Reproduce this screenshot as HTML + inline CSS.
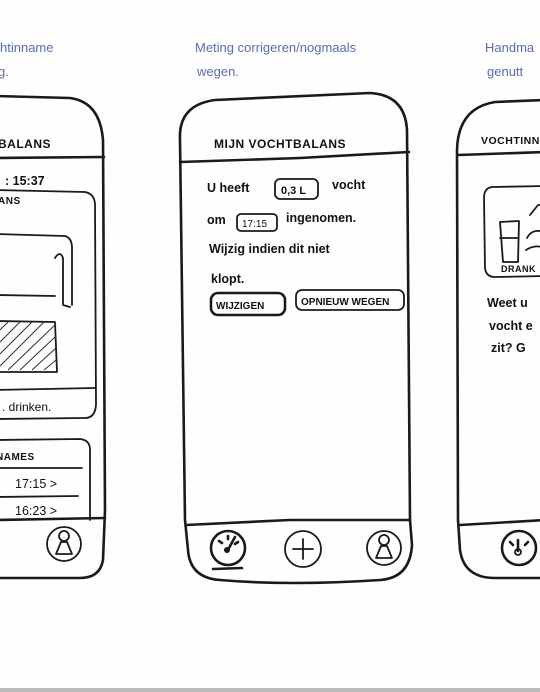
<!DOCTYPE html>
<html><head><meta charset="utf-8"><style>
html,body{margin:0;padding:0;background:#fefefe;width:540px;height:692px;overflow:hidden}
svg{display:block}
text{font-family:"Liberation Sans",sans-serif}
.b{fill:#5b6cae;font-size:13px}
.t{fill:#111;font-size:12.5px;font-weight:bold}
.h{fill:#111;font-size:12px;font-weight:bold;letter-spacing:0.5px}
.s{fill:none;stroke:#1a1a1a;stroke-width:2.6;stroke-linecap:round;stroke-linejoin:round}
.m{fill:none;stroke:#1a1a1a;stroke-width:1.8;stroke-linecap:round;stroke-linejoin:round}
</style></head><body>
<svg width="540" height="692" viewBox="0 0 540 692">
<!-- labels -->
<text class="b" x="0" y="52">htinname</text>
<text class="b" x="-2" y="76">g.</text>
<text class="b" x="195" y="52">Meting  corrigeren/nogmaals</text>
<text class="b" x="197" y="76">wegen.</text>
<text class="b" x="485" y="52">Handma</text>
<text class="b" x="487" y="76">genutt</text>

<!-- left phone -->
<path class="s" d="M-5 96 L70 98 Q100 102 103 140 L105 510 L103 560 Q100 578 80 578 L-5 578"/>
<path class="s" d="M-5 158 L104 157"/>
<path class="s" d="M-5 520 L105 518"/>
<text class="h" x="-2" y="148">BALANS</text>
<text class="t" x="5" y="185">: 15:37</text>
<path class="m" d="M-5 190 L85 192 Q95 194 95 205 L96 405 Q95 418 85 418 L-5 419"/>
<text class="h" x="-2" y="204" style="font-size:10px">ANS</text>
<path class="m" d="M-5 234 L65 236 Q72 238 72 248 L72 305"/>
<path class="m" d="M55 258 Q60 250 63 258 L63 305 L70 307"/>
<path class="m" d="M-5 295 L55 296 M-5 321 L55 322 L57 372 L-5 372"/>
<g stroke="#333" stroke-width="1">
<path d="M0 330 L8 322 M0 342 L20 322 M0 354 L32 322 M0 366 L44 322 M8 370 L56 324 M20 370 L56 336 M32 370 L56 348 M44 370 L56 360"/>
</g>
<path class="m" d="M-5 390 L95 388"/>
<text class="t" x="2" y="411" style="font-weight:normal;font-size:12px">. drinken.</text>
<path class="m" d="M-5 440 L80 439 Q90 440 90 450 L90 520"/>
<text class="h" x="-4" y="460" style="font-size:10px">NAMES</text>
<path class="m" d="M-5 468 L82 468 M-5 497 L78 496"/>
<text class="t" x="15" y="488" style="font-weight:normal">17:15  &gt;</text>
<text class="t" x="15" y="515" style="font-weight:normal">16:23  &gt;</text>
<circle class="m" cx="64" cy="544" r="17"/>
<circle class="m" cx="64" cy="536" r="5"/>
<path class="m" d="M61 542 L56 554 L72 554 L67 542 Z"/>

<!-- middle phone -->
<path class="s" d="M215 100 L370 93 Q405 95 407 130 L410 520 L412 545 Q410 578 380 580 Q290 586 220 580 Q190 578 188 550 L185 520 L180 140 Q178 105 215 100 Z"/>
<path class="s" d="M180 162 L300 158 L409 152"/>
<path class="s" d="M186 525 L290 520 L410 520"/>
<text class="h" x="214" y="148">MIJN  VOCHTBALANS</text>
<text class="t" x="207" y="192">U  heeft</text>
<rect class="m" x="275" y="179" width="43" height="20" rx="5"/>
<text class="t" x="281" y="194" style="font-size:11px">0,3 L</text>
<text class="t" x="332" y="189">vocht</text>
<text class="t" x="207" y="224">om</text>
<rect class="m" x="237" y="214" width="40" height="17" rx="4"/>
<text class="t" x="242" y="227" style="font-size:10px;font-weight:normal">17:15</text>
<text class="t" x="286" y="222">ingenomen.</text>
<text class="t" x="209" y="253">Wijzig  indien  dit  niet</text>
<text class="t" x="211" y="283">klopt.</text>
<rect class="s" x="211" y="293" width="74" height="22" rx="7"/>
<text class="t" x="216" y="309" style="font-size:10px">WIJZIGEN</text>
<rect class="m" x="296" y="290" width="108" height="20" rx="6"/>
<text class="t" x="301" y="305" style="font-size:10px">OPNIEUW WEGEN</text>
<circle class="s" cx="228" cy="548" r="17"/>
<path class="s" d="M229 548 L235 537 M219 541 L222 543 M228 536 L228 539 M238 542 L235 544"/>
<circle cx="227" cy="550" r="3" fill="#1a1a1a"/>
<path class="s" d="M213 569 L242 568"/>
<circle class="m" cx="303" cy="549" r="18"/>
<path class="m" d="M303 539 L303 559 M293 549 L313 549"/>
<circle class="m" cx="384" cy="548" r="17"/>
<circle class="m" cx="384" cy="540" r="5"/>
<path class="m" d="M381 546 L376 558 L392 558 L387 546 Z"/>

<!-- right phone -->
<path class="s" d="M545 100 L495 102 Q458 108 457 150 L458 520 L460 550 Q464 578 495 578 L545 578"/>
<path class="s" d="M458 155 L545 152"/>
<path class="s" d="M460 525 L545 520"/>
<text class="h" x="481" y="144" style="font-size:10.5px">VOCHTINN</text>
<path class="m" d="M545 186 L492 187 Q484 188 484 198 L485 268 Q486 277 495 277 L545 276"/>
<path class="m" d="M500 222 L519 221 L518 262 L503 262 Z M500 238 L518 238"/>
<path class="m" d="M530 215 L538 205 L545 205 M527 238 Q532 228 545 232 M526 250 Q535 244 545 248"/>
<text class="h" x="501" y="272" style="font-size:9px">DRANK</text>
<text class="t" x="487" y="307">Weet  u</text>
<text class="t" x="489" y="330">vocht  e</text>
<text class="t" x="491" y="352">zit?  G</text>
<circle class="s" cx="519" cy="548" r="17"/>
<path class="s" d="M518 551 L518 540 M510 542 L513 545 M528 542 L525 545"/>
<circle cx="518" cy="552" r="3" fill="none" stroke="#1a1a1a" stroke-width="1.8"/>

<rect x="0" y="688" width="540" height="4" fill="#bbb"/>
</svg>
</body></html>
